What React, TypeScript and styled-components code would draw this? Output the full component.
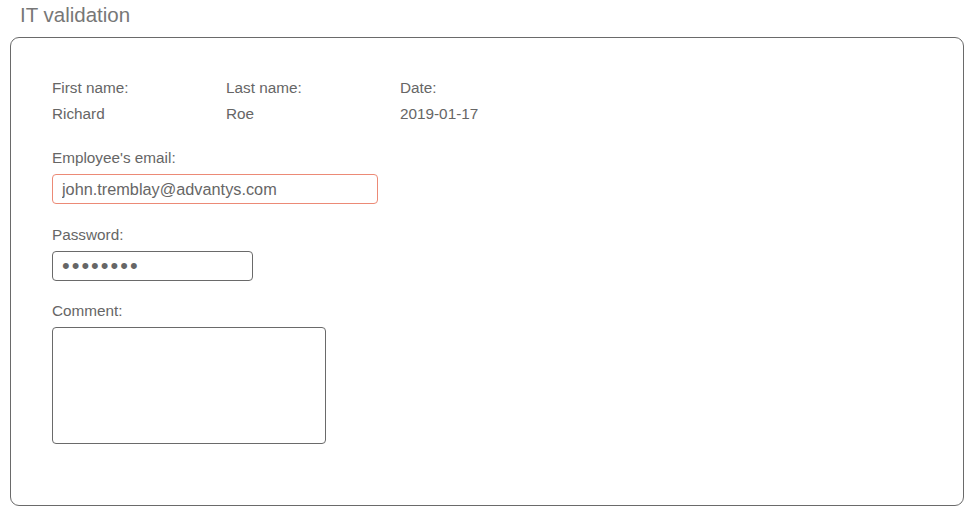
import React from "react";
import styled, { createGlobalStyle } from "styled-components";

const Global = createGlobalStyle`
  html, body { margin: 0; padding: 0; background: #fff; }
  body { font-family: "Liberation Sans", Arial, sans-serif; color: #666; }
`;

const Page = styled.div`
  display: flex;
  flex-direction: column;
  padding: 0 10px 0 10px;
  width: 974px;
  box-sizing: border-box;
`;

const Title = styled.h1`
  margin: 0;
  padding: 3px 0 0 10px;
  height: 37px;
  box-sizing: border-box;
  font-size: 20.5px;
  line-height: 23px;
  font-weight: normal;
  color: #777;
`;

const Panel = styled.section`
  width: 954px;
  height: 469px;
  box-sizing: border-box;
  border: 1px solid #6a6a6a;
  border-radius: 9px;
  padding: 42px 41px 0;
  display: flex;
  flex-direction: column;
`;

const InfoGrid = styled.div`
  display: grid;
  grid-template-columns: repeat(3, 174px);
  row-gap: 10px;
`;

const Label = styled.label<{ $gap?: number }>`
  display: block;
  font-size: 15.3px;
  line-height: 16px;
  color: #666;
  margin-bottom: ${(p) => p.$gap ?? 0}px;
`;

const Value = styled.div`
  font-size: 15.3px;
  line-height: 16px;
  color: #666;
`;

const Field = styled.div<{ $top: number }>`
  display: flex;
  flex-direction: column;
  align-items: flex-start;
  margin-top: ${(p) => p.$top}px;
`;

const Input = styled.input<{ $width: number; $invalid?: boolean }>`
  width: ${(p) => p.$width}px;
  height: 30px;
  box-sizing: border-box;
  border: 1px solid ${(p) => (p.$invalid ? "#ec8a76" : "#6a6a6a")};
  border-radius: 4px;
  padding: 0 9px;
  font-family: "Liberation Sans", Arial, sans-serif;
  font-size: 16.3px;
  color: #666;
  outline: none;
  background: #fff;
  &[type="password"] {
    letter-spacing: 2px;
    font-size: 22px;
  }
`;

const TextArea = styled.textarea`
  width: 274px;
  height: 117px;
  box-sizing: border-box;
  border: 1px solid #6a6a6a;
  border-radius: 4px;
  resize: none;
  outline: none;
  font-family: "Liberation Sans", Arial, sans-serif;
  font-size: 16px;
  color: #666;
  padding: 6px 9px;
`;

export default function App() {
  return (
    <>
      <Global />
      <Page>
        <Title>IT validation</Title>
        <Panel>
          <InfoGrid>
            <Label>First name:</Label>
            <Label>Last name:</Label>
            <Label>Date:</Label>
            <Value>Richard</Value>
            <Value>Roe</Value>
            <Value>2019-01-17</Value>
          </InfoGrid>
          <Field $top={28}>
            <Label $gap={8}>Employee's email:</Label>
            <Input $width={326} $invalid type="text" defaultValue="john.tremblay@advantys.com" />
          </Field>
          <Field $top={23}>
            <Label $gap={8}>Password:</Label>
            <Input $width={201} type="password" defaultValue="12345678" />
          </Field>
          <Field $top={22}>
            <Label $gap={8}>Comment:</Label>
            <TextArea />
          </Field>
        </Panel>
      </Page>
    </>
  );
}
